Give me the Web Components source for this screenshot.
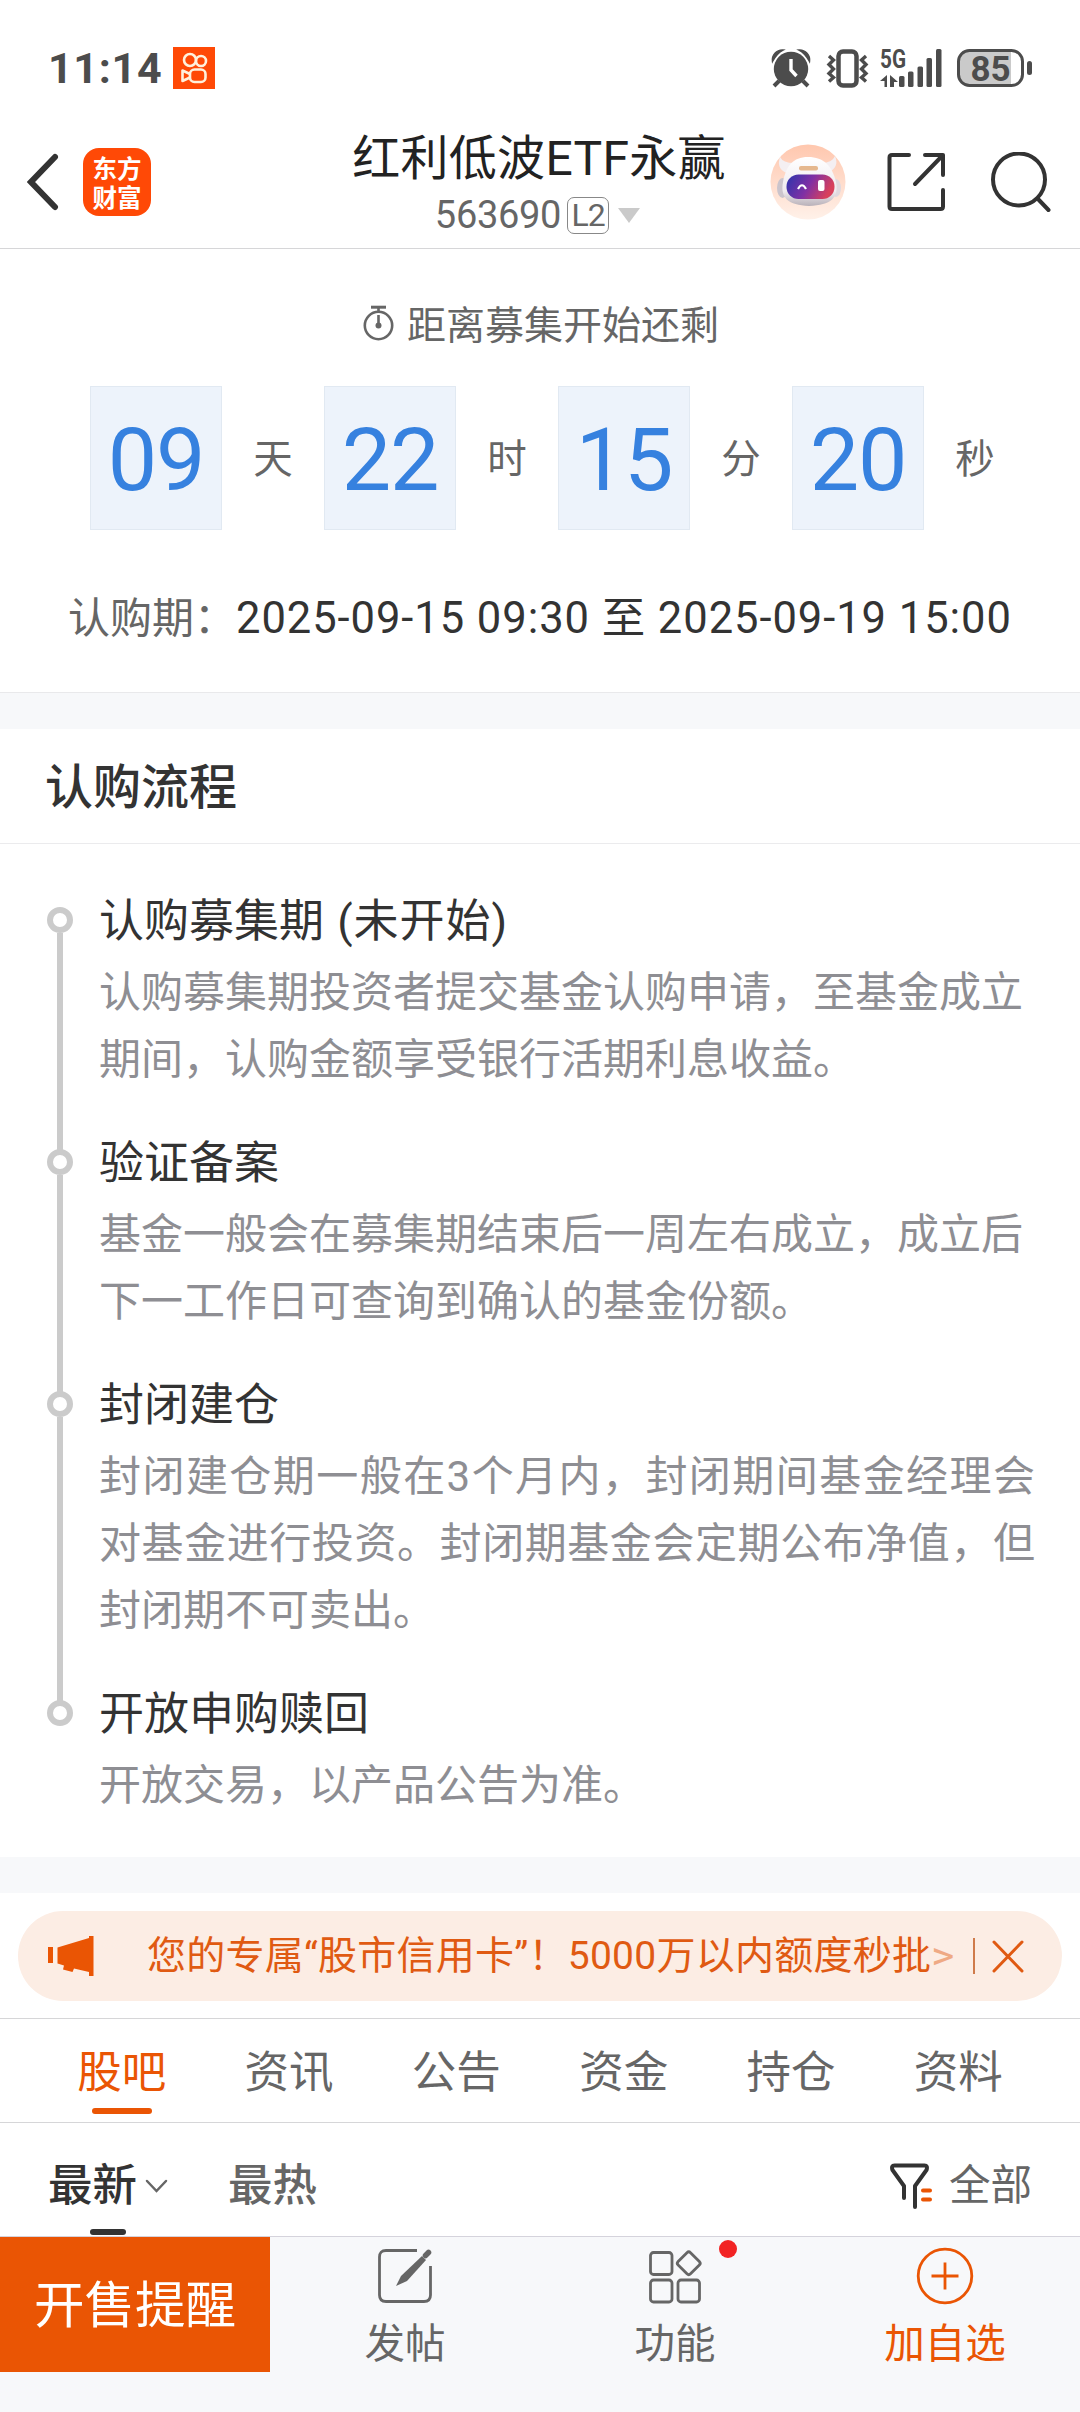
<!DOCTYPE html>
<html lang="zh-CN">
<head>
<meta charset="utf-8">
<meta name="viewport" content="width=device-width, initial-scale=1">
<title>红利低波ETF永赢</title>
<style>
  html, body { margin: 0; padding: 0; }
  body {
    width: 1080px;
    height: 2412px;
    overflow: hidden;
    background: #fff;
    color: #333;
    font-family: Roboto, "Noto Sans CJK SC", sans-serif;
    --accent: #ea5504;
    --muted: #666;
    --band: #f7f8fa;
    --line: #d6d6d8;
  }
</style>
</head>
<body>
<fund-page></fund-page>

<script>
const define = (name, css, html) => {
  customElements.define(name, class extends HTMLElement {
    constructor() {
      super();
      this.attachShadow({ mode: 'open' }).innerHTML = `<style>${css}</style>${html}`;
    }
  });
};

define('status-bar', `
  :host { display: flex; align-items: center; height: 56px; padding: 40px 47px 0 48px; color: #4c4c4c; }
  .time { font-size: 43px; font-weight: 700; letter-spacing: 0.7px; line-height: 56px; }
  .app { margin-left: 11px; }
  .right { display: flex; align-items: center; margin-left: auto; }
  svg { display: block; overflow: visible; }
  .net { margin-left: 11px; }
  .battery { margin-left: 14px; }
  text { font-family: Roboto, sans-serif; font-weight: 700; fill: #4c4c4c; }
`, `
  <span class="time">11:14</span>
  <svg class="app" width="42" height="42" viewBox="0 0 42 42" fill="none" stroke="#fff1dc" stroke-width="2.6">
    <rect width="42" height="42" fill="#ff4906" stroke="none"/>
    <circle cx="17" cy="13" r="6"/><circle cx="28" cy="14" r="5"/>
    <rect x="17" y="22.500" width="15.500" height="12.500" rx="4.500"/>
    <path d="M17 27l-7.500-3.500v10.500l7.500-3.500" stroke-linejoin="round"/>
  </svg>
  <div class="right">
    <svg width="98" height="40" viewBox="0 0 98 40">
      <g fill="#4c4c4c">
        <circle cx="20" cy="21" r="17.200"/>
        <path d="M1.500 13.500A10 10 0 0 1 12 2Q6 5 1.500 13.500zM38.500 13.500A10 10 0 0 0 28 2Q34 5 38.500 13.500z" stroke="#4c4c4c" stroke-width="1.500"/>
        <path d="M8 33l-5 5M32 33l5 5" stroke="#4c4c4c" stroke-width="4"/>
      </g>
      <path d="M20 11v11l5.500 6" fill="none" stroke="#fff" stroke-width="3.400"/>
      <rect x="67.500" y="3.500" width="18" height="34" rx="4.500" fill="none" stroke="#4c4c4c" stroke-width="4.500"/>
      <path d="M58 8l4.500 4-4.500 4.500 4.500 4.500-4.500 4.500 4.500 4-4.500 4M95 8l-4.500 4 4.500 4.500-4.500 4.500 4.500 4.500-4.500 4 4.500 4" fill="none" stroke="#4c4c4c" stroke-width="3.400"/>
    </svg>
    <svg class="net" width="63" height="40" viewBox="0 0 63 40">
      <text x="0" y="20" font-size="25.500" textLength="26" lengthAdjust="spacingAndGlyphs">5G</text>
      <path d="M7 27v12H4.500v-6H0zM10 27l8 7h-4v5H10z" fill="#4c4c4c"/>
      <g fill="#4c4c4c">
        <rect x="19" y="28" width="5.500" height="11" rx="1.500"/>
        <rect x="28" y="23.500" width="5.500" height="15.500" rx="1.500"/>
        <rect x="37.500" y="18.500" width="5.500" height="20.500" rx="1.500"/>
        <rect x="46.500" y="10" width="5.500" height="29" rx="1.500"/>
        <rect x="56" y="1" width="5.500" height="38" rx="1.500"/>
      </g>
    </svg>
    <svg class="battery" width="76" height="38" viewBox="0 0 76 38">
      <path d="M12 1.500h42v35H12A10.500 10.500 0 0 1 1.500 26V12A10.500 10.500 0 0 1 12 1.500z" fill="#cacaca"/>
      <rect x="1.500" y="1.500" width="64" height="35" rx="11" fill="none" stroke="#4c4c4c" stroke-width="3"/>
      <rect x="70" y="12" width="5" height="14" rx="2.500" fill="#4c4c4c"/>
      <text x="33.500" y="31.500" font-size="35" text-anchor="middle">85</text>
    </svg>
  </div>
`);

define('app-header', `
  :host { display: flex; align-items: center; box-sizing: border-box; height: 153px; padding: 19px 29px 0 27px; border-bottom: 1.500px solid var(--line); }
  svg { display: block; }
  .side { flex: 1; display: flex; align-items: center; }
  .end { justify-content: flex-end; }
  .logo {
    display: flex; flex-direction: column; align-items: center; justify-content: center;
    width: 68px; height: 68px; margin-left: 24px; border-radius: 16px; background: #ff4906; color: #fff;
    font: 700 24.500px/29px "Noto Sans CJK SC", sans-serif;
  }
  .title { padding-top: 6px; text-align: center; }
  h1 { margin: 0; font-size: 48px; font-weight: 400; line-height: 61px; color: #222; letter-spacing: 0.3px; }
  .code { display: flex; align-items: center; justify-content: center; height: 52px; padding-right: 3px; font-size: 38px; color: var(--muted); letter-spacing: -0.3px; }
  .level { box-sizing: border-box; width: 42px; height: 37px; margin: 0 9px 0 6px; border: 1.500px solid #888; border-radius: 7px; font-size: 32px; line-height: 34px; letter-spacing: -1px; text-align: center; }
  .share { margin: 0 45px 0 41px; }
`, `
  <div class="side">
    <svg width="32" height="58" viewBox="0 0 32 58" fill="none" stroke="#333" stroke-width="6" stroke-linecap="round"><path d="M28 4L4 29l24 25"/></svg>
    <div class="logo"><span>东方</span><span>财富</span></div>
  </div>
  <div class="title">
    <h1>红利低波ETF永赢</h1>
    <div class="code">563690<span class="level">L2</span>
      <svg width="22" height="15"><path d="M0 0h22L11 15z" fill="#cacaca"/></svg>
    </div>
  </div>
  <div class="side end">
    <svg width="76" height="76" viewBox="0 0 76 76">
      <defs>
        <linearGradient id="halo" x2="0" y2="1"><stop stop-color="#ffc7ae"/><stop offset="1" stop-color="#fff1e9"/></linearGradient>
        <linearGradient id="visor" x2="1" y2=".3"><stop stop-color="#2b35ad"/><stop offset=".55" stop-color="#8030a4"/><stop offset="1" stop-color="#d8405c"/></linearGradient>
        <linearGradient id="shell" x2="0" y2="1"><stop stop-color="#fff"/><stop offset=".7" stop-color="#efeaee"/><stop offset="1" stop-color="#b9b1b9"/></linearGradient>
      </defs>
      <circle cx="38" cy="38" r="37.500" fill="url(#halo)"/>
      <path d="M17 29Q6 25 10 13Q13 19 24 19zM57 29Q70 24 65 12Q62 19 52 19z" fill="#f4eff2"/>
      <ellipse cx="12.500" cy="44" rx="5.500" ry="10" fill="#cbc4cc"/>
      <ellipse cx="66" cy="44" rx="5" ry="9" fill="#e0d9df"/>
      <path d="M38 13C54 13 62 22 66 38C69 54 61 61 39 62C18 61 10 54 13 38C16 22 23 13 38 13z" fill="url(#shell)"/>
      <rect x="16.500" y="30.500" width="48" height="24.500" rx="12" fill="url(#visor)"/>
      <rect x="29" y="22" width="19" height="4.500" rx="2" fill="#e5b78e"/>
      <path d="M28 45q4-7.500 8 0" fill="none" stroke="#fff" stroke-width="2.200"/>
      <rect x="48" y="36" width="6.500" height="11" rx="2" fill="#fff"/>
    </svg>
    <svg class="share" width="59" height="60" viewBox="0 0 59 60" fill="none" stroke="#333" stroke-width="4" stroke-linecap="round" stroke-linejoin="round">
      <path d="M22 3H5Q2.500 3 2.500 5.500V54.500Q2.500 57 5 57H53.500Q56 57 56 54.500V38M38 3H56V23M56 3L28 32"/>
    </svg>
    <svg width="60" height="60" viewBox="0 0 60 60" fill="none" stroke="#333" stroke-width="4" stroke-linecap="round">
      <circle cx="28" cy="27.500" r="26"/><path d="M47 47L57.500 58"/>
    </svg>
  </div>
`);

define('count-cell', `
  :host { display: flex; align-items: center; }
  .num { box-sizing: border-box; width: 132px; height: 144px; border: 1px solid #e1e9f2; background: #edf3fb; color: #3681df; font-size: 88px; line-height: 145px; letter-spacing: -1.300px; text-align: center; }
  .unit { width: 102px; padding-bottom: 6px; text-align: center; font-size: 39.500px; color: var(--muted); }
`, `<span class="num"><slot></slot></span><span class="unit"><slot name="unit"></slot></span>`);

define('count-down', `
  :host { display: block; box-sizing: border-box; height: 443px; padding-top: 43px; }
  .head { display: flex; align-items: center; justify-content: center; gap: 13px; height: 60px; padding-left: 2px; font-size: 39px; color: var(--muted); }
  .head svg { padding-top: 2px; }
  .cells { display: flex; margin: 34px 0 0 90px; }
  .period { display: flex; margin: 59px 0 0 68px; font-size: 42px; line-height: 60px; white-space: pre; }
  .label { width: 168px; color: var(--muted); }
  .dates { font-size: 43.500px; letter-spacing: 0.950px; }
`, `
  <div class="head">
    <svg width="31" height="36" viewBox="0 0 31 36" fill="none" stroke="#666" stroke-width="2.600">
      <circle cx="15.500" cy="20.500" r="13.700"/><path d="M15.500 10v10M15.500 2v5"/><path d="M8 2.200h15" stroke-width="3"/>
      <circle cx="15.500" cy="20.500" r="3" fill="#666" stroke="none"/>
    </svg>
    <span>距离募集开始还剩</span>
  </div>
  <div class="cells">
    <count-cell>09<span slot="unit">天</span></count-cell>
    <count-cell>22<span slot="unit">时</span></count-cell>
    <count-cell>15<span slot="unit">分</span></count-cell>
    <count-cell>20<span slot="unit">秒</span></count-cell>
  </div>
  <div class="period"><span class="label">认购期：</span><span class="dates">2025-09-15 09:30 至 2025-09-19 15:00</span></div>
`);

define('flow-step', `
  :host { display: flex; gap: 26px; padding-left: 47px; }
  .rail { display: flex; flex-direction: column; align-items: center; width: 26px; padding-top: 17px; }
  .dot { flex: none; box-sizing: border-box; width: 26px; height: 26px; border: 6px solid #cbcbcb; border-radius: 50%; }
  .bar { flex: 1; width: 6px; margin-bottom: -18px; background: #cbcbcb; }
  :host([last]) .bar { display: none; }
  .title { height: 60px; font-size: 45px; line-height: 64px; word-spacing: 2px; color: #333; white-space: pre; }
  .text { width: 936px; padding: 9px 0 39px; font-size: 42px; line-height: 67px; color: #8e8e93; }
  ::slotted(.full) { display: block; text-align: justify; text-align-last: justify; }
`, `
  <div class="rail"><i class="dot"></i><i class="bar"></i></div>
  <div><div class="title"><slot name="title"></slot></div><div class="text"><slot></slot></div></div>
`);

define('flow-section', `
  :host { display: block; box-sizing: border-box; height: 1128px; }
  h2 { box-sizing: border-box; height: 115px; margin: 0 0 46px; padding-left: 45px; border-bottom: 1px solid #ebebed; font-size: 48px; font-weight: 500; line-height: 117px; color: #333; }
  .state { letter-spacing: 1px; }
`, `
  <h2>认购流程</h2>
  <flow-step><span slot="title">认购募集期 <span class="state">(未开始)</span></span>认购募集期投资者提交基金认购申请，至基金成立<br>期间，认购金额享受银行活期利息收益。</flow-step>
  <flow-step><span slot="title">验证备案</span>基金一般会在募集期结束后一周左右成立，成立后<br>下一工作日可查询到确认的基金份额。</flow-step>
  <flow-step><span slot="title">封闭建仓</span><span class="full">封闭建仓期一般在3个月内，封闭期间基金经理会</span><span class="full">对基金进行投资。封闭期基金会定期公布净值，但</span>封闭期不可卖出。</flow-step>
  <flow-step last><span slot="title">开放申购赎回</span>开放交易，以产品公告为准。</flow-step>
`);

define('notice-bar', `
  :host { display: flex; align-items: center; box-sizing: border-box; height: 90px; margin: 18px 18px 17px; padding: 0 38px 0 30px; border-radius: 45px; background: #fcede4; color: #e05a12; }
  .text { width: 817px; margin-left: 53px; font-size: 39px; line-height: 90px; letter-spacing: 0.250px; white-space: nowrap; }
  .more { display: inline-block; transform: scaleX(1.15); transform-origin: left; opacity: .45; }
  .rule { width: 1.500px; height: 36px; margin: 0 17px 0 9px; background: #cf7b4b; }
`, `
  <svg width="46" height="40" viewBox="0 0 46 40" fill="#ea5504"><path d="M0 11h5v16H0zM9.500 11.500L41 2V0h4.500v40H41v-4L26 32.500l-1.500 3.500L15 33.500l1-4-6.500-2z"/></svg>
  <span class="text">您的专属“股市信用卡”！5000万以内额度秒批<span class="more">&gt;</span></span>
  <i class="rule"></i>
  <svg width="32" height="33" viewBox="0 0 32 33" stroke="#e05a12" stroke-width="3" stroke-linecap="round"><path d="M2 2l28 29M30 2L2 31"/></svg>
`);

define('tab-item', `
  :host { flex: 1; display: flex; flex-direction: column; align-items: center; font-size: 44.500px; line-height: 60px; color: var(--muted); }
  :host([active]) { color: var(--accent); }
  :host([active])::after { content: ""; width: 60px; height: 6px; margin-top: 5px; border-radius: 3px; background: var(--accent); }
`, `<slot></slot>`);

define('tab-strip', `
  :host { display: flex; box-sizing: border-box; height: 105px; padding: 24px 38px 0; border: solid var(--line); border-width: 1px 0; }
`, `<slot></slot>`);

define('sort-bar', `
  :host { display: flex; box-sizing: border-box; height: 114px; padding: 33px 48px 0 48px; border-bottom: 1.500px solid #d5d3dc; line-height: 60px; font-size: 44.500px; font-weight: 500; color: var(--muted); }
  .sort { display: flex; flex-direction: column; width: 180px; }
  .row { display: flex; align-items: center; gap: 8px; height: 60px; color: #333; }
  .mark { width: 36px; height: 6px; margin: 13px 0 0 42px; border-radius: 3px; background: #333; }
  .all { display: flex; align-items: center; gap: 16px; height: 60px; margin-left: auto; font-size: 41.500px; font-weight: 400; }
`, `
  <div class="sort">
    <div class="row">最新<svg width="23" height="14" viewBox="0 0 23 14" fill="none" stroke="#666" stroke-width="2.500" stroke-linecap="round"><path d="M2 2l9.500 10L21 2"/></svg></div>
    <i class="mark"></i>
  </div>
  <span>最热</span>
  <div class="all">
    <svg width="43" height="46" viewBox="0 0 43 46" fill="none" stroke="#333" stroke-width="4" stroke-linecap="round" stroke-linejoin="round">
      <path d="M14 35V23L2.500 7Q1 2.500 4.500 2.500H34.500Q38 2.500 36.500 7L25 23V44"/>
      <path d="M33 27.500h7M33 36.500h7" stroke="#ea5504"/>
    </svg>
    <span>全部</span>
  </div>
`);

define('dock-item', `
  :host { flex: 1; position: relative; display: flex; flex-direction: column; align-items: center; padding-top: 10px; color: var(--muted); }
  :host([accent]) { color: var(--accent); }
  ::slotted(svg) { display: block; width: 58px; height: 58px; fill: none; stroke: currentColor; stroke-width: 2.800; }
  .label { margin-top: 9px; font-size: 40.500px; line-height: 60px; }
  .badge { display: none; position: absolute; left: 179px; top: 3px; width: 18px; height: 18px; border-radius: 50%; background: #f22323; }
  :host([badge]) .badge { display: block; }
`, `<slot name="icon"></slot><span class="label"><slot></slot></span><i class="badge"></i>`);

define('bottom-dock', `
  :host { display: flex; height: 175px; background: var(--band); }
  .remind { width: 270px; height: 135px; background: var(--accent); color: #fff; font-size: 50.500px; line-height: 138px; text-align: center; }
`, `
  <div class="remind">开售提醒</div>
  <dock-item>
    <svg slot="icon" viewBox="0 0 58 58">
      <path d="M41 3.500H10Q3.500 3.500 3.500 10V48Q3.500 54.500 10 54.500H48Q54.500 54.500 54.500 48V19"/>
      <path d="M20 38l5-10L46 8l4 4L31 33z" transform="translate(0 1)" fill="currentColor" stroke="none"/>
      <path d="M49.500 8.500L52.500 5.500" stroke-width="5.500" stroke-linecap="round"/>
    </svg>发帖</dock-item>
  <dock-item badge>
    <svg slot="icon" viewBox="0 0 58 58">
      <rect x="4.500" y="5.500" width="21.500" height="22" rx="3"/>
      <rect x="4.500" y="33" width="21.500" height="22" rx="3"/>
      <rect x="32" y="33" width="21.500" height="22" rx="3"/>
      <rect x="34" y="7.500" width="17.500" height="17.500" rx="2.500" transform="rotate(45 42.750 16.250)"/>
    </svg>功能</dock-item>
  <dock-item accent>
    <svg slot="icon" viewBox="0 0 58 58"><circle cx="29" cy="29" r="26.800"/><path d="M29 15.500v27M15.500 29h27"/></svg>加自选</dock-item>
`);

define('fund-page', `
  :host { display: flex; flex-direction: column; width: 1080px; height: 2412px; }
  .band { box-sizing: border-box; height: 37px; background: var(--band); }
  .band.top { border-top: 1px solid #e9e9eb; }
  .band.low { height: 36px; }
`, `
  <status-bar></status-bar>
  <app-header></app-header>
  <count-down></count-down>
  <div class="band top"></div>
  <flow-section></flow-section>
  <div class="band low"></div>
  <notice-bar></notice-bar>
  <tab-strip>
    <tab-item active>股吧</tab-item>
    <tab-item>资讯</tab-item>
    <tab-item>公告</tab-item>
    <tab-item>资金</tab-item>
    <tab-item>持仓</tab-item>
    <tab-item>资料</tab-item>
  </tab-strip>
  <sort-bar></sort-bar>
  <bottom-dock></bottom-dock>
`);
</script>
</body>
</html>
